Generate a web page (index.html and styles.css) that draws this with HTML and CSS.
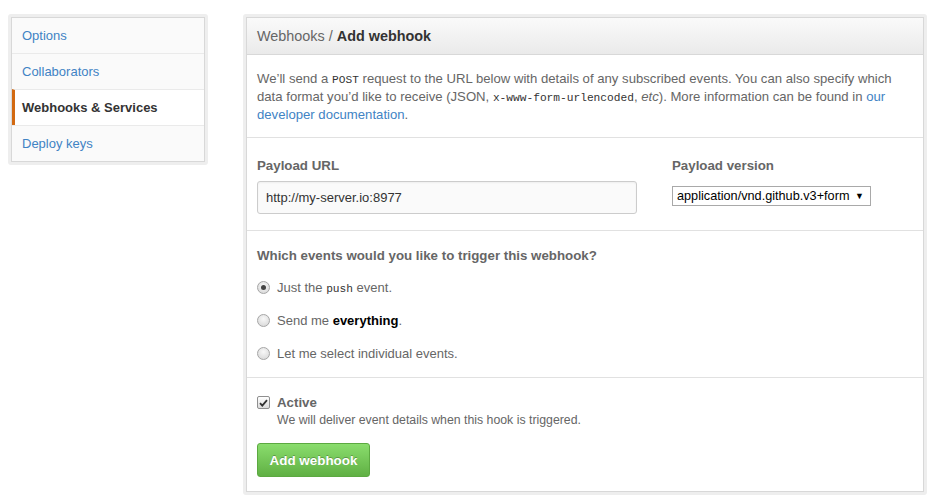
FILE: index.html
```html
<!DOCTYPE html>
<html>
<head>
<meta charset="utf-8">
<link rel="stylesheet" href="styles.css">
</head>
<body>
<div class="page">
  <nav class="menu-wrap">
    <ul class="menu">
      <li class="menu-item"><a>Options</a></li>
      <li class="menu-item"><a>Collaborators</a></li>
      <li class="menu-item selected"><a>Webhooks &amp; Services</a></li>
      <li class="menu-item"><a>Deploy keys</a></li>
    </ul>
  </nav>
  <main class="box-wrap">
    <div class="box">
      <div class="box-header"><span class="crumb">Webhooks /</span> <strong>Add webhook</strong></div>
      <div class="section intro">
        <p>We’ll send a <code>POST</code> request to the URL below with details of any subscribed events. You can also specify which data format you’d like to receive (JSON, <code>x-www-form-urlencoded</code>, <em>etc</em>). More information can be found in <a class="link">our developer documentation</a>.</p>
      </div>
      <div class="section payload">
        <div class="field url-field">
          <label class="label">Payload URL</label>
          <div class="input">http://my-server.io:8977</div>
        </div>
        <div class="field version-field">
          <label class="label">Payload version</label>
          <div class="select"><span>application/vnd.github.v3+form</span><span class="caret">▼</span></div>
        </div>
      </div>
      <div class="section events">
        <h3 class="label">Which events would you like to trigger this webhook?</h3>
        <div class="radio-row"><span class="radio checked"></span><span>Just the <code>push</code> event.</span></div>
        <div class="radio-row"><span class="radio"></span><span>Send me <strong class="dark">everything</strong>.</span></div>
        <div class="radio-row"><span class="radio"></span><span>Let me select individual events.</span></div>
      </div>
      <div class="section active">
        <div class="check-row">
          <span class="checkbox"><svg width="9" height="8" viewBox="0 0 9 8"><path d="M1 4.2 L3.3 6.6 L8 1.2" fill="none" stroke="#333" stroke-width="1.8"/></svg></span>
          <div>
            <div class="check-label">Active</div>
            <div class="note">We will deliver event details when this hook is triggered.</div>
          </div>
        </div>
        <button class="button">Add webhook</button>
      </div>
    </div>
  </main>
</div>
</body>
</html>
```
FILE: styles.css
```css
* { box-sizing: border-box; }
html, body { margin: 0; padding: 0; background: #fff; }
body {
  font-family: "Liberation Sans", Arial, sans-serif;
  font-size: 13px;
  color: #333;
}
.page {
  display: flex;
  align-items: flex-start;
  padding: 14px 0 0 8px;
  gap: 35px;
}
.menu-wrap {
  width: 200px;
  padding: 3px;
  background: #eeeeee;
  border-radius: 3px;
}
.menu {
  list-style: none;
  margin: 0;
  padding: 0;
  border: 1px solid #d8d8d8;
  background: #fafafa;
}
.menu-item {
  height: 36px;
  border-top: 1px solid #eaeaea;
  display: flex;
  align-items: center;
  padding-left: 10px;
  font-size: 13px;
}
.menu-item:first-child { border-top: 0; height: 35px; }
.menu-item a { color: #4183c4; }
.menu-item.selected {
  background: #fff;
  border-left: 3px solid #d26911;
  padding-left: 7px;
}
.menu-item.selected a { color: #333; font-weight: bold; }

.box-wrap {
  width: 684px;
  padding: 3px;
  background: #eeeeee;
  border-radius: 3px;
}
.box {
  border: 1px solid #d8d8d8;
  background: #fff;
}
.box-header {
  height: 37px;
  padding: 0 10px;
  display: flex;
  align-items: center;
  gap: 4px;
  font-size: 14.4px;
  color: #333;
  background: linear-gradient(#fafafa, #eaeaea);
  border-bottom: 1px solid #d8d8d8;
}
.crumb { color: #666; }
.section {
  padding: 0 10px;
  border-top: 1px solid #e1e1e1;
}
.box-header + .section { border-top: 0; }
.intro { padding-top: 15px; padding-bottom: 13px; }
.intro p {
  margin: 0;
  font-size: 13.15px;
  line-height: 18px;
  color: #666;
}
code {
  font-family: "Liberation Mono", "DejaVu Sans Mono", monospace;
  font-size: 11.2px;
  line-height: 1;
  color: #333;
}
.link { color: #4183c4; }
.payload {
  display: flex;
  gap: 35px;
  padding-top: 19px;
  padding-bottom: 16px;
}
.field { display: flex; flex-direction: column; }
.url-field { width: 380px; }
.label {
  display: block;
  margin: 0;
  font-size: 13.3px;
  font-weight: bold;
  line-height: 18px;
  color: #666;
}
.input {
  margin-top: 6px;
  height: 33px;
  padding: 0 8px;
  display: flex;
  align-items: center;
  background: #fafafa;
  border: 1px solid #ccc;
  border-radius: 3px;
  box-shadow: inset 0 1px 2px rgba(0,0,0,0.05);
  color: #333;
}
.select {
  margin-top: 11px;
  width: 199px;
  height: 20px;
  padding: 0 6px 0 4px;
  display: flex;
  align-items: center;
  justify-content: space-between;
  border: 1px solid #a9a9a9;
  background: #fff;
  color: #000;
  font-size: 12.7px;
}
.caret { font-size: 9px; color: #000; }
.events { padding-top: 16px; padding-bottom: 7px; }
.events .label { margin-bottom: 6px; }
.radio-row {
  display: flex;
  align-items: center;
  gap: 7px;
  height: 33px;
  color: #666;
}
.radio {
  width: 13px;
  height: 13px;
  border-radius: 50%;
  border: 1px solid #a6a6a6;
  background: radial-gradient(circle at 50% 35%, #f8f8f8, #d4d4d4);
  display: flex;
  align-items: center;
  justify-content: center;
}
.radio.checked::after {
  content: "";
  width: 5px;
  height: 5px;
  border-radius: 50%;
  background: #444;
}
.dark { color: #000; }
.active { padding-top: 16px; padding-bottom: 14px; }
.check-row { display: flex; gap: 7px; align-items: flex-start; }
.checkbox {
  margin-top: 2px;
  width: 13px;
  height: 13px;
  border: 1px solid #8f8f8f;
  border-radius: 2px;
  background: linear-gradient(#fff, #dcdcdc);
  display: flex;
  align-items: center;
  justify-content: center;
}
.check-label {
  font-size: 13.3px;
  font-weight: bold;
  color: #666;
  line-height: 18px;
}
.note { font-size: 12.3px; color: #666; line-height: 16px; }
.button {
  display: block;
  margin-top: 15px;
  width: 113px;
  height: 34px;
  padding: 0;
  font-family: "Liberation Sans", Arial, sans-serif;
  font-size: 13.4px;
  font-weight: bold;
  color: #fff;
  text-shadow: 0 -1px 0 rgba(0,0,0,0.25);
  background: linear-gradient(#8add6d, #60b044);
  border: 1px solid #5ca941;
  border-radius: 3px;
}
```
